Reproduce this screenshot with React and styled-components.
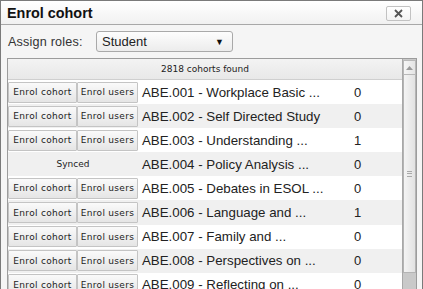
import React from "react";
import styled, { createGlobalStyle } from "styled-components";

const COHORTS = [
  { id: "001", name: "Workplace Basic ...", count: 0, synced: false },
  { id: "002", name: "Self Directed Study", count: 0, synced: false },
  { id: "003", name: "Understanding ...", count: 1, synced: false },
  { id: "004", name: "Policy Analysis ...", count: 0, synced: true },
  { id: "005", name: "Debates in ESOL ...", count: 0, synced: false },
  { id: "006", name: "Language and ...", count: 1, synced: false },
  { id: "007", name: "Family and ...", count: 0, synced: false },
  { id: "008", name: "Perspectives on ...", count: 0, synced: false },
  { id: "009", name: "Reflecting on ...", count: 0, synced: false },
];

const GlobalStyle = createGlobalStyle`
  html, body {
    margin: 0;
    padding: 0;
    background: #fff;
    font-family: "Liberation Sans", Arial, sans-serif;
  }
  * { box-sizing: border-box; }
`;

const Dialog = styled.div`
  width: 423px;
  height: 289px;
  overflow: hidden;
  border: 1px solid #7a7a7a;
  border-bottom: none;
  background: #f5f5f5;
  display: flex;
  flex-direction: column;
`;

const Header = styled.div`
  height: 24px;
  flex: none;
  display: flex;
  align-items: center;
  justify-content: space-between;
  padding: 0 11px 0 6px;
  background: linear-gradient(#ffffff, #f1f1f1);
  border-bottom: 1px solid #a8a8a8;
`;

const Title = styled.h1`
  margin: 0;
  font-size: 14.4px;
  font-weight: bold;
  color: #111;
`;

const CloseButton = styled.button`
  width: 25px;
  height: 15px;
  padding: 0;
  margin-top: 1px;
  border: 1px solid #c2c2c2;
  border-radius: 2px;
  background: linear-gradient(#ffffff, #f3f3f3);
  display: flex;
  align-items: center;
  justify-content: center;
`;

const Body = styled.div`
  flex: 1;
  display: flex;
  flex-direction: column;
  padding: 6px 4px 0 6px;
  min-height: 0;
`;

const RoleRow = styled.div`
  display: flex;
  align-items: center;
  gap: 8px;
  height: 21px;
  padding-left: 1px;
`;

const Label = styled.label`
  font-size: 12.6px;
  color: #333;
  letter-spacing: 0.2px;
  width: 80px;
`;

const Select = styled.div`
  width: 137px;
  height: 21px;
  border: 1px solid #a9a9a9;
  border-radius: 3px;
  background: linear-gradient(#fdfdfd, #ececec);
  display: flex;
  align-items: center;
  justify-content: space-between;
  padding: 0 8px 0 5px;
  font-size: 13px;
  color: #222;
`;

const Arrow = styled.span`
  font-size: 9px;
  color: #111;
`;

const TableFrame = styled.div`
  margin-top: 6px;
  width: 410px;
  flex: 1;
  min-height: 0;
  border: 1px solid #9c9c9c;
  border-bottom: none;
  display: flex;
  background: #fff;
`;

const Content = styled.div`
  flex: 1;
  min-width: 0;
  display: flex;
  flex-direction: column;
`;

const TableHead = styled.div`
  height: 21px;
  flex: none;
  display: flex;
  align-items: center;
  justify-content: center;
  background: linear-gradient(#f3f3f3, #e8e8e8);
  border-bottom: 1px solid #cfcfcf;
  font-family: "DejaVu Sans", sans-serif;
  font-size: 9px;
  color: #222;
`;

const Row = styled.div`
  height: 24.1px;
  flex: none;
  display: flex;
  align-items: center;
  background: ${(p) => (p.$shade ? "#f0f0f0" : "#ffffff")};
`;

const Actions = styled.div`
  width: 130px;
  display: flex;
  justify-content: center;
  align-items: center;
`;

const ActionButton = styled.button`
  width: ${(p) => p.$w}px;
  height: 21px;
  margin: 0;
  padding: 0;
  border: 1px solid #c4c4c4;
  border-radius: 1px;
  background: linear-gradient(#fafafa, #e5e5e5);
  font-family: "DejaVu Sans", sans-serif;
  font-size: 9px;
  letter-spacing: 0.3px;
  color: #222;
`;

const Synced = styled.span`
  font-family: "DejaVu Sans", sans-serif;
  font-size: 9px;
  color: #222;
`;

const Name = styled.div`
  width: 210px;
  padding-left: 4px;
  font-size: 13.3px;
  color: #222;
  white-space: nowrap;
`;

const Count = styled.div`
  padding-left: 6px;
  font-size: 13px;
  color: #222;
`;

const Scrollbar = styled.div`
  width: 14px;
  flex: none;
  display: flex;
  flex-direction: column;
  background: #c9c9c9;
  border-left: 1px solid #a8a8a8;
`;

const ScrollUp = styled.div`
  height: 15px;
  flex: none;
  margin: 1px 0 0;
  border: 1px solid #b8b8b8;
  background: linear-gradient(90deg, #f6f6f6, #e4e4e4);
  display: flex;
  align-items: center;
  justify-content: center;
`;

const Thumb = styled.div`
  height: 198px;
  flex: none;
  border: 1px solid #b4b4b4;
  border-top: none;
  background: linear-gradient(90deg, #f4f4f4, #e2e2e2);
  display: flex;
  align-items: center;
  justify-content: center;
`;

const Grip = styled.div`
  width: 5px;
  height: 6px;
  border-top: 1px solid #a9a9a9;
  border-bottom: 1px solid #a9a9a9;
  position: relative;
  &::after {
    content: "";
    position: absolute;
    left: 0;
    right: 0;
    top: 1.5px;
    border-top: 1px solid #a9a9a9;
  }
`;

export default function App() {
  return (
    <>
      <GlobalStyle />
      <Dialog>
        <Header>
          <Title>Enrol cohort</Title>
          <CloseButton aria-label="Close">
            <svg width="9" height="9" viewBox="0 0 9 9">
              <path d="M1 1L8 8M8 1L1 8" stroke="#555" strokeWidth="1.8" />
            </svg>
          </CloseButton>
        </Header>
        <Body>
          <RoleRow>
            <Label>Assign roles:</Label>
            <Select>
              Student
              <Arrow>▼</Arrow>
            </Select>
          </RoleRow>
          <TableFrame>
            <Content>
              <TableHead>2818 cohorts found</TableHead>
              {COHORTS.map((c, i) => (
                <Row key={c.id} $shade={i % 2 === 1}>
                  <Actions>
                    {c.synced ? (
                      <Synced>Synced</Synced>
                    ) : (
                      <>
                        <ActionButton $w={69}>Enrol cohort</ActionButton>
                        <ActionButton $w={61}>Enrol users</ActionButton>
                      </>
                    )}
                  </Actions>
                  <Name>
                    ABE.{c.id} - {c.name}
                  </Name>
                  <Count>{c.count}</Count>
                </Row>
              ))}
            </Content>
            <Scrollbar>
              <ScrollUp>
                <svg width="7" height="4" viewBox="0 0 7 4">
                  <path d="M0 4L3.5 0L7 4Z" fill="#9a9a9a" />
                </svg>
              </ScrollUp>
              <Thumb>
                <Grip />
              </Thumb>
            </Scrollbar>
          </TableFrame>
        </Body>
      </Dialog>
    </>
  );
}
